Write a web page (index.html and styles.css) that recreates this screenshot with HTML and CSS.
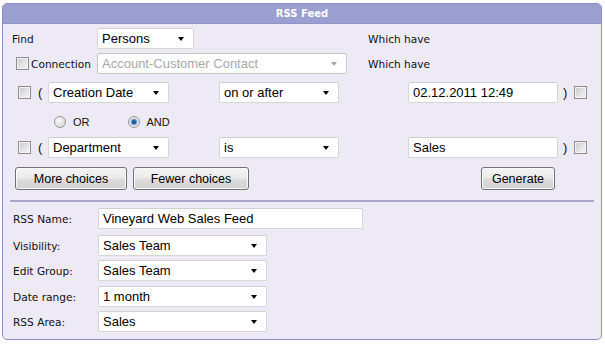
FILE: index.html
```html
<!DOCTYPE html>
<html>
<head>
<meta charset="utf-8">
<link rel="stylesheet" href="styles.css">
</head>
<body>
<div class="panel">
  <div class="header">RSS Feed</div>
  <div class="content">
    <div class="row r1">
      <div class="lead"><span class="lbl">Find</span></div>
      <div class="sel w-persons"><span class="val">Persons</span><span class="arrow"></span></div>
      <span class="lbl which">Which have</span>
    </div>
    <div class="row r2">
      <div class="lead"><span class="cb cb-conn"></span><span class="lbl">Connection</span></div>
      <div class="sel disabled w-conn"><span class="val">Account-Customer Contact</span><span class="arrow"></span></div>
      <span class="lbl which2">Which have</span>
    </div>
    <div class="row r3">
      <span class="cb cb-left"></span><span class="paren">(</span>
      <div class="sel w-field"><span class="val">Creation Date</span><span class="arrow"></span></div>
      <div class="sel w-op"><span class="val">on or after</span><span class="arrow"></span></div>
      <div class="inp w-val"><span class="val">02.12.2011 12:49</span></div>
      <span class="paren rp">)</span><span class="cb cb-right"></span>
    </div>
    <div class="row r4">
      <span class="radio r-or"></span><span class="rlbl">OR</span>
      <span class="radio checked r-and"></span><span class="rlbl">AND</span>
    </div>
    <div class="row r5">
      <span class="cb cb-left"></span><span class="paren">(</span>
      <div class="sel w-field"><span class="val">Department</span><span class="arrow"></span></div>
      <div class="sel w-op"><span class="val">is</span><span class="arrow"></span></div>
      <div class="inp w-val"><span class="val">Sales</span></div>
      <span class="paren rp">)</span><span class="cb cb-right"></span>
    </div>
    <div class="row r6">
      <button class="btn b-more">More choices</button>
      <button class="btn b-fewer">Fewer choices</button>
      <button class="btn b-gen">Generate</button>
    </div>
    <div class="sep"></div>
    <div class="row f1">
      <span class="flbl">RSS Name:</span>
      <div class="inp w-name"><span class="val">Vineyard Web Sales Feed</span></div>
    </div>
    <div class="row f2">
      <span class="flbl">Visibility:</span>
      <div class="sel w-f"><span class="val">Sales Team</span><span class="arrow"></span></div>
    </div>
    <div class="row f3">
      <span class="flbl">Edit Group:</span>
      <div class="sel w-f"><span class="val">Sales Team</span><span class="arrow"></span></div>
    </div>
    <div class="row f4">
      <span class="flbl">Date range:</span>
      <div class="sel w-f"><span class="val">1 month</span><span class="arrow"></span></div>
    </div>
    <div class="row f5">
      <span class="flbl">RSS Area:</span>
      <div class="sel w-f"><span class="val">Sales</span><span class="arrow"></span></div>
    </div>
  </div>
</div>
</body>
</html>
```
FILE: styles.css
```css
* { box-sizing: border-box; }
html, body { margin: 0; padding: 0; background: #ffffff; }
body { font-family: "DejaVu Sans", Verdana, sans-serif; font-size: 10.6px; color: #111; }

.panel {
  margin: 3px 0 0 2px;
  width: 600px;
  height: 337px;
  border: 1px solid #8c8fc6;
  border-radius: 5px;
  background: #edeaf6;
  overflow: hidden;
}
.header {
  height: 20px;
  line-height: 20px;
  background: #9a9ed0;
  color: #fff;
  font-weight: bold;
  font-size: 10px;
  text-align: center;
  border-bottom: 1px solid #8f93c8;
}
.content { padding: 4px 0 0 9px; }

.row { display: flex; align-items: center; height: 21px; }
.r2 { margin-top: 4px; }
.r3 { margin-top: 8px; }
.r4 { margin-top: 8px; }
.r5 { margin-top: 5px; }
.r6 { margin-top: 9px; height: 23px; }

.lead { width: 85px; display: flex; align-items: center; flex-shrink: 0; }
.lbl { white-space: nowrap; }
.which { margin-left: 174px; }
.which2 { margin-left: 21px; }

.cb {
  display: inline-block;
  width: 13px; height: 13px;
  border: 1px solid #8e8e8e;
  background: linear-gradient(135deg, #c9c9c9 0%, #e6e6e6 60%, #f6f6f6 100%);
  box-shadow: inset 0 0 0 1px #f2f2f2;
  flex-shrink: 0;
}
.cb-conn { margin-left: 4px; margin-right: 2px; }
.cb-left { margin-left: 6px; }
.cb-right { margin-left: 7px; }
.paren { font-family: "Liberation Sans", Arial, sans-serif; font-size: 13px; margin-left: 7px; width: 10px; }
.rp { margin-left: 5px; width: auto; }

.sel, .inp {
  display: flex; align-items: center;
  height: 21px;
  background: #fff;
  border: 1px solid #d6d6d6;
  border-top-color: #cfcfcf;
  border-radius: 2px;
  font-family: "Liberation Sans", Arial, sans-serif;
  font-size: 13px;
  color: #000;
  padding-left: 4px;
  position: relative;
  flex-shrink: 0;
  white-space: nowrap;
}
.val { flex: 1; }
.arrow {
  width: 0; height: 0;
  border-left: 3.5px solid transparent;
  border-right: 3.5px solid transparent;
  border-top: 4px solid #000;
  margin-right: 9px;
}
.sel.disabled { color: #a8a8a8; border-color: #c6c6c6; }
.sel.disabled .arrow { border-top-color: #a8a8a8; }

.w-persons { width: 97px; }
.w-conn { width: 250px; }
.w-field { width: 121px; }
.w-op { width: 120px; margin-left: 50px; }
.w-val { width: 150px; margin-left: 69px; }
.w-name { width: 265px; }
.w-f { width: 169px; }

.radio {
  display: inline-block;
  width: 12px; height: 12px;
  border-radius: 50%;
  border: 1px solid #9a9a9a;
  background: radial-gradient(circle at 35% 35%, #fafafa 0%, #dcdcdc 70%, #c8c8c8 100%);
  flex-shrink: 0;
}
.radio.checked {
  background: radial-gradient(circle at 50% 50%, #1d3f6e 0%, #2d6ab3 25%, #79a9de 42%, #e8e8e8 52%, #d0d0d0 100%);
}
.r-or { margin-left: 42px; }
.r-and { margin-left: 38px; }
.rlbl { font-family: "Liberation Sans", Arial, sans-serif; font-size: 11px; margin-left: 7px; color: #111; }

.btn {
  height: 23px;
  border: 1px solid #717171;
  border-radius: 3px;
  background: linear-gradient(#f3f3f3 0%, #ececec 48%, #dedede 52%, #d0d0d0 100%);
  font-family: "Liberation Sans", Arial, sans-serif;
  font-size: 12.5px;
  color: #000;
  padding: 0;
  box-shadow: inset 0 0 0 1px #fbfbfb;
}
.b-more { width: 112px; margin-left: 3px; }
.b-fewer { width: 116px; margin-left: 6px; }
.b-gen { width: 74px; margin-left: 232px; }

.sep {
  height: 2px;
  background: #a7a7d1;
  margin: 10px 0 0 -2px;
  width: 584px;
}
.f1 { margin-top: 6px; }
.f2 { margin-top: 6px; }
.f3 { margin-top: 4px; }
.f4 { margin-top: 5px; }
.f5 { margin-top: 4px; }
.flbl { width: 86px; padding-left: 1px; white-space: nowrap; flex-shrink: 0; }
```
